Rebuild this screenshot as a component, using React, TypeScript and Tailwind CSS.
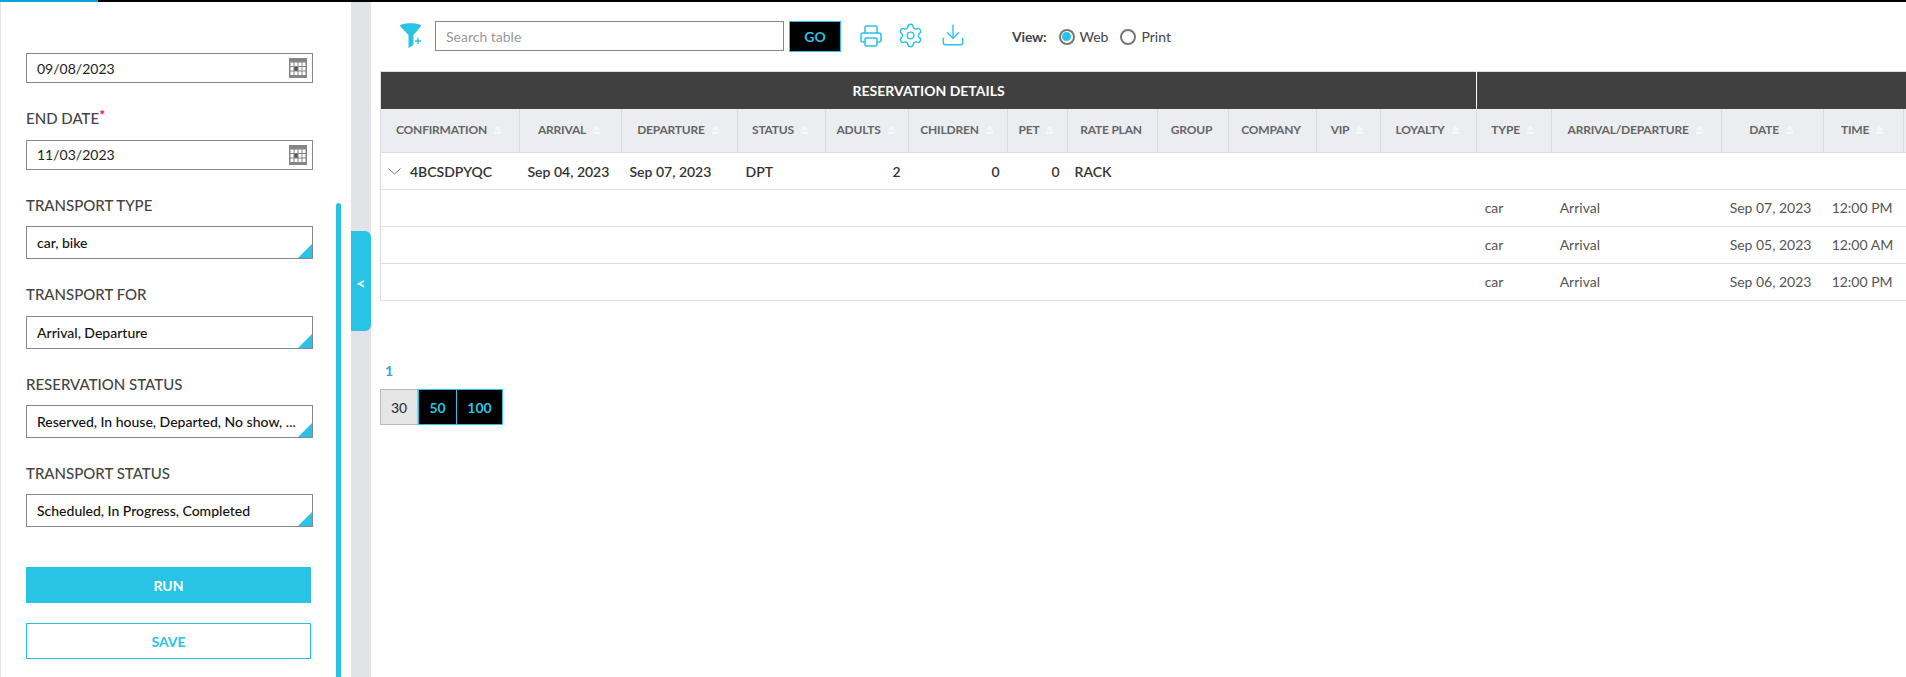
import { Download, Printer, Settings } from "lucide-react";

const FONT = "font-['Lato','Open_Sans',sans-serif]";

const columns = [
  { label: "CONFIRMATION", width: "w-[139px]", sort: true },
  { label: "ARRIVAL", width: "w-[102px]", sort: true },
  { label: "DEPARTURE", width: "w-[116px]", sort: true },
  { label: "STATUS", width: "w-[88px]", sort: true },
  { label: "ADULTS", width: "w-[83px]", sort: true },
  { label: "CHILDREN", width: "w-[99px]", sort: true },
  { label: "PET", width: "w-[60px]", sort: true },
  { label: "RATE PLAN", width: "w-[90px]", sort: false },
  { label: "GROUP", width: "w-[71px]", sort: false },
  { label: "COMPANY", width: "w-[88px]", sort: false },
  { label: "VIP", width: "w-[64px]", sort: true },
  { label: "LOYALTY", width: "w-[96px]", sort: true },
  { label: "TYPE", width: "w-[75px]", sort: true },
  { label: "ARRIVAL/DEPARTURE", width: "w-[170px]", sort: true },
  { label: "DATE", width: "w-[102px]", sort: true },
  { label: "TIME", width: "w-[80px]", sort: true },
  { label: "", width: "w-[100px]", sort: false },
];

const childRows = [
  { date: "Sep 07, 2023", time: "12:00 PM" },
  { date: "Sep 05, 2023", time: "12:00 AM" },
  { date: "Sep 06, 2023", time: "12:00 PM" },
];

const SortArrows = () => (
  <svg width="7" height="9" viewBox="0 0 7 9" className="ml-[7px] shrink-0">
    <path d="M3.500 0L7 4H0Z" fill="#f8f8f9" />
    <path d="M0 5.500H7V8H0Z" fill="#f8f8f9" />
  </svg>
);

const CalendarIcon = () => (
  <svg width="18" height="20" viewBox="0 0 18 20" className="shrink-0">
    <rect width="18" height="20" fill="#858585" />
    {[4.5, 9, 13.5].map((y) =>
      [1.5, 5.5, 9.5, 13.5].map((x) => (
        <rect
          key={`${x}-${y}`}
          x={x}
          y={y}
          width="3"
          height="3.500"
          fill={x === 5.5 && y === 9 ? "#555" : "#fff"}
        />
      ))
    )}
  </svg>
);

const FilterIcon = () => (
  <svg width="22" height="26" viewBox="0 0 22 26" className="shrink-0">
    <path d="M0 2C5 -0.500 16 -0.500 21 2C21 4 15 10 13.500 12V22L8.500 25V12C7 10 0 4 0 2Z" fill="#29c3e5" />
    <path d="M15 18H21M18 15V21" stroke="#29c3e5" strokeWidth="1.300" />
  </svg>
);

const DateField = ({ value, textClass = "" }: { value: string; textClass?: string }) => (
  <div className="flex h-[30px] w-[287px] items-center justify-between border border-[#888] pl-[10px] pr-[5px] text-[14px] text-[#222]">
    <span className={textClass}>{value}</span>
    <CalendarIcon />
  </div>
);

const SelectField = ({ value }: { value: string }) => (
  <div className="relative flex h-[33px] w-[287px] items-center border border-[#888] pl-[10px] text-[14px] font-medium text-[#111]">
    <span>{value}</span>
    <span className="absolute bottom-0 right-0 size-[14px] bg-[#29c3e5] [clip-path:polygon(100%_0,100%_100%,0_100%)]" />
  </div>
);

const Label = ({ children, className = "" }: { children: React.ReactNode; className?: string }) => (
  <div className={`h-[20px] text-[15px] font-medium leading-[20px] text-[#444] ${className}`}>{children}</div>
);

const Sidebar = () => (
  <aside className="relative h-full w-[351px] shrink-0 border-l border-[#e2e3e6] pl-[25px] pt-[51px]">
    <DateField value="09/08/2023" />
    <Label className="mt-[25px] mb-[12px]">
      END DATE<span className="relative -top-[4px] text-[14px] font-bold leading-none text-[#e8112d]">*</span>
    </Label>
    <DateField value="11/03/2023" textClass="-mt-px" />
    <Label className="mt-[25px] mb-[11px]">TRANSPORT TYPE</Label>
    <SelectField value="car, bike" />
    <Label className="mt-[25px] mb-[12px]">TRANSPORT FOR</Label>
    <SelectField value="Arrival, Departure" />
    <Label className="mt-[25px] mb-[11px]">RESERVATION STATUS</Label>
    <SelectField value="Reserved, In house, Departed, No show, ..." />
    <Label className="mt-[25px] mb-[11px]">TRANSPORT STATUS</Label>
    <SelectField value="Scheduled, In Progress, Completed" />
    <button className="mt-[40px] block h-[36px] w-[285px] bg-[#29c3e5] pt-px text-[14px] font-bold text-white">
      RUN
    </button>
    <button className="mt-[20px] block h-[36px] w-[285px] border border-[#29c3e5] pt-px text-[14px] font-bold text-[#29c3e5]">
      SAVE
    </button>
    <div className="absolute right-[10px] top-[201px] bottom-0 w-[5px] rounded-t-[3px] bg-[#29c3e5]" />
  </aside>
);

const Toolbar = () => (
  <div className="flex h-[69px] items-start pt-[19px]">
    <div className="ml-[20px] mt-[2px]">
      <FilterIcon />
    </div>
    <div className="ml-[13px] flex h-[30px] w-[349px] items-center border border-[#888] pl-[10px] text-[14px] text-[#999]">
      Search table
    </div>
    <button className="ml-[5px] h-[31px] w-[52px] border border-[#29c3e5] bg-black text-[14px] font-bold text-[#29c3e5]">
      GO
    </button>
    <Printer className="ml-[18px] mt-[3px] text-[#29c3e5]" size={24} strokeWidth={1.5} />
    <Settings className="ml-[14px] mt-[1px] text-[#29c3e5]" size={27} strokeWidth={1.25} />
    <Download className="ml-[16px] mt-[1px] text-[#29c3e5]" size={26} strokeWidth={1.25} />
    <div className="ml-[46px] mt-[5px] flex items-center text-[14px] text-[#444]">
      <span className="font-bold tracking-[-0.2px]">View:</span>
      <span className="ml-[12px] flex size-[16px] items-center justify-center rounded-full border-2 border-[#777]">
        <span className="size-[9px] rounded-full bg-[#29c3e5]" />
      </span>
      <span className="ml-[5px]">Web</span>
      <span className="ml-[12px] size-[16px] rounded-full border-2 border-[#777]" />
      <span className="ml-[5px]">Print</span>
    </div>
  </div>
);

const ReportTable = () => (
  <table className="table-fixed w-[1623px] border-collapse border-l border-[#ddd] text-[14px]">
    <colgroup>
      {columns.map((col) => (
        <col key={col.label} className={col.width} />
      ))}
    </colgroup>
    <thead>
      <tr className="h-[37px] border-t border-[#ddd] bg-[#404040] text-white">
        <th colSpan={12} className="border-r border-white text-[14px] font-bold">
          RESERVATION DETAILS
        </th>
        <th colSpan={5} />
      </tr>
      <tr className="h-[44px] border-b border-[#ddd] bg-[#ecedf1] text-[#666]">
        {columns.map((col) => (
          <th key={col.label} className="border-r border-[#ddd] p-0 pr-[3px] text-[12px] font-bold tracking-[-0.2px]">
            <span className="flex items-center justify-center">
              {col.label}
              {col.sort && <SortArrows />}
            </span>
          </th>
        ))}
      </tr>
    </thead>
    <tbody>
      <tr className="h-[37px] border-b border-[#ddd] font-semibold text-[#333]">
        <td className="p-0">
          <span className="flex items-center pl-[7px]">
            <svg width="13" height="7" viewBox="0 0 13 7" className="mr-[9px] shrink-0">
              <path d="M0.500 0.500L6.500 6L12.500 0.500" fill="none" stroke="#777" />
            </svg>
            4BCSDPYQC
          </span>
        </td>
        <td className="pl-[8px]">Sep 04, 2023</td>
        <td className="pl-[8px]">Sep 07, 2023</td>
        <td className="pl-[8px]">DPT</td>
        <td className="pr-[8px] text-right">2</td>
        <td className="pr-[8px] text-right">0</td>
        <td className="pr-[8px] text-right">0</td>
        <td className="pl-[7px]">RACK</td>
        <td colSpan={9} />
      </tr>
      {childRows.map((row) => (
        <tr key={row.date} className="h-[37px] border-b border-[#ddd] text-[#555]">
          <td colSpan={12} />
          <td className="pb-[2px] pl-[8px]">car</td>
          <td className="pb-[2px] pl-[8px]">Arrival</td>
          <td className="pb-[2px] pl-[8px]">{row.date}</td>
          <td className="pb-[2px] pl-[8px]">{row.time}</td>
          <td />
        </tr>
      ))}
    </tbody>
  </table>
);

const Pagination = () => (
  <div className="mt-[60px]">
    <div className="h-[20px] pl-[5px] text-[14px] font-bold leading-[20px] text-[#29a9e0]">1</div>
    <div className="mt-[8px] flex text-[14px] font-bold">
      <span className="flex h-[36px] w-[38px] items-center justify-center border border-[#bbb] bg-[#e6e6e6] font-medium text-[#333]">
        30
      </span>
      <span className="flex h-[36px] w-[39px] items-center justify-center border border-[#29c3e5] bg-black text-[#29c3e5]">
        50
      </span>
      <span className="flex h-[36px] w-[46px] items-center justify-center border border-[#29c3e5] border-l-0 bg-black text-[#29c3e5]">
        100
      </span>
    </div>
  </div>
);

export default function App() {
  return (
    <div className={`${FONT} flex h-[677px] w-[1906px] flex-col overflow-hidden bg-white`}>
      <div className="flex h-[2px] shrink-0 bg-black">
        <div className="w-[98px] bg-[#0aa5d0]" />
      </div>
      <div className="flex min-h-0 flex-1">
        <Sidebar />
        <div className="relative w-[20px] shrink-0 bg-[#e2e3e6]">
          <button className="absolute left-0 top-[229px] flex h-[100px] w-[20px] items-center justify-center rounded-r-[6px] bg-[#29c3e5] pt-[4px] text-[16px] font-bold text-white">
            &lt;
          </button>
        </div>
        <main className="min-w-0 flex-1 overflow-hidden pl-[9px]">
          <Toolbar />
          <ReportTable />
          <Pagination />
        </main>
      </div>
    </div>
  );
}
